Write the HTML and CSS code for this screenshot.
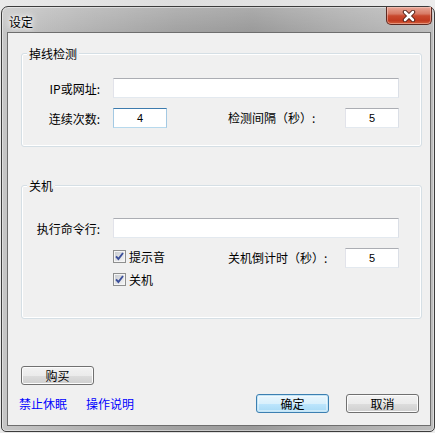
FILE: index.html
```html
<!DOCTYPE html>
<html lang="zh-CN">
<head>
<meta charset="utf-8">
<title>设定</title>
<link rel="stylesheet" href="styles.css">
</head>
<body>
<div class="window">
  <div class="titlebar">
    <span class="title">设定</span>
    <button class="close" type="button" aria-label="关闭">
      <svg width="14" height="12" viewBox="0 0 14 12">
        <path d="M3 2 L11 10 M11 2 L3 10" fill="none" stroke="#4a1a12" stroke-width="4.4" stroke-linecap="round"/>
        <path d="M3 2 L11 10 M11 2 L3 10" fill="none" stroke="#ffffff" stroke-width="2.6" stroke-linecap="round"/>
      </svg>
    </button>
  </div>
  <div class="client">
    <fieldset class="group g1">
      <legend>掉线检测</legend>
      <div class="row">
        <span class="lbl">IP或网址:</span>
        <input class="tb wide" type="text" value="">
      </div>
      <div class="row">
        <span class="lbl">连续次数:</span>
        <input class="tb num focus" type="text" value="4">
        <span class="lbl2">检测间隔（秒）:</span>
        <input class="tb num" type="text" value="5">
      </div>
    </fieldset>

    <fieldset class="group g2">
      <legend>关机</legend>
      <div class="row">
        <span class="lbl">执行命令行:</span>
        <input class="tb wide" type="text" value="">
      </div>
      <div class="row top">
        <div class="checks">
          <label class="check">
            <svg class="cb" width="13" height="13" viewBox="0 0 13 13">
              <defs><linearGradient id="cbg1" x1="0" y1="0" x2="1" y2="1"><stop offset="0" stop-color="#c9ccd2"/><stop offset="1" stop-color="#f4f4f4"/></linearGradient></defs>
              <rect x="0.5" y="0.5" width="12" height="12" fill="#f5f5f5" stroke="#8e8f8f"/>
              <rect x="2" y="2" width="9" height="9" fill="url(#cbg1)"/>
              <path d="M3 6.3 L5.4 9 L10 3" fill="none" stroke="#3b4f9a" stroke-width="1.9"/>
            </svg>
            <span>提示音</span>
          </label>
          <label class="check">
            <svg class="cb" width="13" height="13" viewBox="0 0 13 13">
              <defs><linearGradient id="cbg2" x1="0" y1="0" x2="1" y2="1"><stop offset="0" stop-color="#c9ccd2"/><stop offset="1" stop-color="#f4f4f4"/></linearGradient></defs>
              <rect x="0.5" y="0.5" width="12" height="12" fill="#f5f5f5" stroke="#8e8f8f"/>
              <rect x="2" y="2" width="9" height="9" fill="url(#cbg2)"/>
              <path d="M3 6.3 L5.4 9 L10 3" fill="none" stroke="#3b4f9a" stroke-width="1.9"/>
            </svg>
            <span>关机</span>
          </label>
        </div>
        <span class="lbl2">关机倒计时（秒）:</span>
        <input class="tb num" type="text" value="5">
      </div>
    </fieldset>

    <div class="actions">
      <button class="btn" type="button">购买</button>
    </div>
    <div class="footer">
      <a class="link" href="#">禁止休眠</a>
      <a class="link" href="#">操作说明</a>
      <button class="btn default ok" type="button">确定</button>
      <button class="btn" type="button">取消</button>
    </div>
  </div>
</div>
</body>
</html>
```
FILE: styles.css
```css
* { box-sizing: border-box; }
html, body { margin: 0; padding: 0; }
body {
  width: 435px;
  height: 433px;
  overflow: hidden;
  background: linear-gradient(to right, #e9e9e9, #dedede 40%, #e4e4e4 70%, #ececec);
  font-family: "Noto Sans CJK SC", "Liberation Sans", sans-serif;
  font-size: 12px;
  color: #000;
}

.window {
  margin: 6px 0 0 1px;
  width: 434px;
  height: 426px;
  border: 1px solid #3c3c3c;
  border-radius: 7px 7px 5px 5px;
  background:
    linear-gradient(to bottom, rgba(255,255,255,0.18), rgba(255,255,255,0) 25px),
    linear-gradient(to right, #c6c6c6 0%, #b4b4b4 18%, #a2a2a2 40%, #9a9a9a 58%, #aeaeae 80%, #bdbdbd 100%);
  box-shadow: inset 0 0 0 1px rgba(255,255,255,0.45);
  padding: 0 3px 5px 5px;
  display: flex;
  flex-direction: column;
}

.titlebar {
  height: 25px;
  display: flex;
  justify-content: space-between;
  align-items: flex-start;
  margin-right: -1px;
}
.title {
  padding: 8px 0 0 2px;
  line-height: 14px;
  font-size: 12px;
  color: #000;
  text-shadow: 0 0 6px #fff, 0 0 10px #fff, 0 0 3px #fff;
}
.close {
  width: 46px;
  height: 18px;
  margin: 0;
  padding: 0;
  border: 1px solid #5e2a22;
  border-top: 0;
  border-radius: 0 0 5px 5px;
  background: linear-gradient(to bottom, #e8a696 0%, #d77a66 40%, #c9492f 52%, #c13a20 80%, #d4603c 100%);
  box-shadow: inset 0 0 0 1px rgba(255,220,210,0.45);
  display: flex;
  align-items: center;
  justify-content: center;
}
.close svg { display: block; }

.client {
  flex: 1;
  border: 1px solid #6e6e6e;
  background: #f0f0f0;
  display: flex;
  flex-direction: column;
}

.group {
  margin: 13px 0 0 13px;
  width: 401px;
  min-width: 0;
  padding: 17px 0 18px 0;
  border: 1px solid #d5dfe5;
  border-radius: 3px;
  box-shadow: inset 0 0 0 1px #ffffff;
}
.group legend {
  margin-left: 5px;
  padding: 0 2px;
  line-height: 15px;
  font-size: 12px;
  background: #f0f0f0;
}
.g2 {
  margin-top: 31px;
  padding: 25px 0 31px 0;
}

.row {
  display: flex;
  align-items: center;
  height: 20px;
}
.row + .row { margin-top: 10px; }
.row.top {
  height: 39px;
  align-items: flex-start;
}

.lbl {
  width: 78px;
  margin-right: 13px;
  text-align: right;
  white-space: nowrap;
}
.lbl2 {
  width: 117px;
  margin-left: 61px;
  white-space: nowrap;
  line-height: 20px;
}
.row.top .lbl2 { margin-left: 0; }

.tb {
  height: 20px;
  margin: 0;
  padding: 0 3px;
  border: 1px solid;
  border-color: #abadb3 #dbdfe6 #e3e9ef #e2e3ea;
  background: #fff;
  font: 11px "Liberation Sans", sans-serif;
  color: #000;
  outline: none;
}
.wide { width: 286px; }
.num { width: 54px; text-align: center; }
.focus { border-color: #3d7bad #a4c9e3 #b7d9ed #a4c9e3; }

.checks {
  margin-left: 91px;
  width: 115px;
  display: flex;
  flex-direction: column;
  gap: 7px;
}
.check {
  display: flex;
  align-items: center;
  gap: 3px;
  height: 16px;
}
.cb { display: block; flex: none; }

.actions {
  margin: 47px 0 0 13px;
  display: flex;
}
.btn {
  width: 73px;
  height: 19px;
  margin: 0;
  padding: 0;
  border: 1px solid #707070;
  border-radius: 3px;
  background: linear-gradient(to bottom, #f2f2f2 0%, #ebebeb 50%, #dddddd 50%, #cfcfcf 100%);
  box-shadow: inset 0 0 0 1px #fcfcfc;
  font: 12px "Noto Sans CJK SC", sans-serif;
  line-height: 16px;
  color: #000;
}
.btn.default {
  border-color: #3c7fb1;
  background: linear-gradient(to bottom, #eaf6fd 0%, #d9f0fc 50%, #bee6fd 50%, #a7d9f5 100%);
  box-shadow: inset 0 0 0 1px #c4e5f6, inset 0 0 0 2px rgba(255,255,255,0.4);
}

.footer {
  margin-top: 9px;
  height: 19px;
  padding: 0 11px;
  display: flex;
  align-items: center;
}
.link {
  color: #0000ff;
  text-decoration: none;
}
.link + .link { margin-left: 19px; }
.ok { margin-left: auto; }
.btn + .btn { margin-left: 17px; }
```
